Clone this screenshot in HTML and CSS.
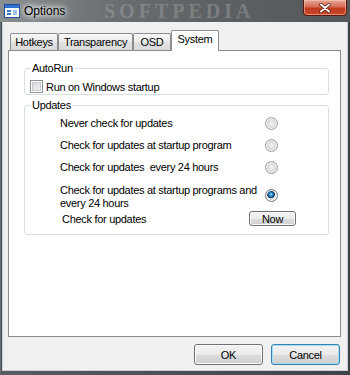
FILE: index.html
```html
<!DOCTYPE html>
<html lang="en">

<head>
    <meta charset="UTF-8">
    <meta name="viewport" content="width=device-width, initial-scale=1.0">
    <title>Options</title>
    <link rel="stylesheet" href="styles.css">
</head>

<body>

    <div class="window">
        <header class="titlebar">
            <svg class="app-icon" width="16" height="14" viewBox="0 0 16 14">
                <rect x="0.5" y="0.5" width="15" height="13" fill="#ffffff" stroke="#1f4f9a"/>
                <rect x="1" y="1" width="14" height="3" fill="#2f6fd0"/>
                <rect x="3" y="6" width="4" height="2" fill="#3a78d0"/>
                <rect x="3" y="9" width="4" height="2" fill="#3a78d0"/>
                <rect x="9" y="6" width="4" height="5" fill="#9fc0ea"/>
            </svg>
            <span class="title">Options</span>
            <span class="watermark">SOFTPEDIA</span>
            <div class="close-button">
                <svg width="12" height="10" viewBox="0 0 12 10">
                    <path d="M2 1.5 L10 8.5 M10 1.5 L2 8.5" stroke="#4a1208" stroke-width="3.4" stroke-linecap="round"/>
                    <path d="M2 1.5 L10 8.5 M10 1.5 L2 8.5" stroke="#ffffff" stroke-width="2" stroke-linecap="round"/>
                </svg>
            </div>
        </header>

        <div class="client">
            <div class="tabs">
                <div class="tab tab-hotkeys">Hotkeys</div>
                <div class="tab tab-transparency">Transparency</div>
                <div class="tab tab-osd">OSD</div>
                <div class="tab tab-system selected">System</div>
            </div>

            <div class="panel">
                <fieldset class="group group-autorun">
                    <legend>AutoRun</legend>
                    <label class="check-row"><span class="checkbox"></span>Run on Windows startup</label>
                </fieldset>

                <fieldset class="group group-updates">
                    <legend>Updates</legend>
                    <div class="option">
                        <span class="option-label">Never check for updates</span>
                        <span class="radio"></span>
                    </div>
                    <div class="option">
                        <span class="option-label">Check for updates at startup program</span>
                        <span class="radio"></span>
                    </div>
                    <div class="option">
                        <span class="option-label">Check for updates&nbsp; every 24 hours</span>
                        <span class="radio"></span>
                    </div>
                    <div class="option option-wrap">
                        <span class="option-label">Check for updates at startup programs and every 24 hours</span>
                        <span class="radio radio-on"></span>
                    </div>
                    <div class="option option-now">
                        <span class="option-label">Check for updates</span>
                        <button class="btn btn-small">Now</button>
                    </div>
                </fieldset>
            </div>

            <div class="buttons">
                <button class="btn">OK</button>
                <button class="btn btn-default">Cancel</button>
            </div>
        </div>
    </div>

</body>

</html>
```

FILE: styles.css
```css
body {
    margin: 0;
    font-family: 'Liberation Sans', Arial, sans-serif;
    font-size: 11px;
    letter-spacing: -0.3px;
    color: #000;
}

.window {
    width: 350px;
    height: 375px;
    overflow: hidden;
    background: linear-gradient(to right, #7d8486 0, #4c5355 1px, #565d60 3px, #3e4446 100%);
}

/* title bar */
.titlebar {
    position: relative;
    height: 22px;
    display: flex;
    align-items: center;
    background: linear-gradient(to right, #8a8e90 0, #6c7072 30%, #5d6163 60%, #54585a 100%);
}

.app-icon {
    margin-left: 4px;
    flex: none;
}

.title {
    margin-left: 4px;
    font-size: 12px;
    letter-spacing: 0;
    color: #000;
    text-shadow: 0 0 4px #fff, 0 0 8px #fff, 0 0 10px rgba(255, 255, 255, 0.8);
}

.watermark {
    position: absolute;
    left: 104px;
    top: 0;
    line-height: 22px;
    font-family: 'Liberation Serif', serif;
    font-weight: bold;
    font-size: 20px;
    letter-spacing: 4px;
    color: rgba(185, 185, 185, 0.35);
}

.close-button {
    margin-left: auto;
    margin-right: 3px;
    align-self: flex-start;
    width: 44px;
    height: 16px;
    box-sizing: border-box;
    border: 1px solid #5a1a10;
    border-top: none;
    border-radius: 0 0 4px 4px;
    background: linear-gradient(#e6a796 0, #d66c54 45%, #c13a1d 55%, #c8482a 100%);
    box-shadow: inset 0 0 0 1px rgba(255, 210, 190, 0.5);
    display: flex;
    align-items: center;
    justify-content: center;
    position: relative;
    z-index: 1;
}

/* client area */
.client {
    margin: 0 3px;
    height: 348px;
    background: #f0f0f0;
    box-shadow: 0 0 0 1px #c9cfd2;
}

.tabs {
    height: 28px;
    padding-left: 7px;
    display: flex;
    align-items: flex-end;
}

.tab {
    box-sizing: border-box;
    height: 17px;
    line-height: 16px;
    text-align: center;
    border: 1px solid #8c8e94;
    border-bottom: none;
    border-radius: 2px 2px 0 0;
    background: linear-gradient(#f7f7f7, #ececec 50%, #e2e2e2 51%, #d9d9d9);
}

.tab-hotkeys { width: 48px; }
.tab-transparency { width: 75px; }
.tab-osd { width: 38px; }
.tab-system { width: 48px; }

.tab.selected {
    height: 21px;
    line-height: 17px;
    margin-bottom: -1px;
    background: #fff;
    position: relative;
    z-index: 1;
}

.panel {
    margin-left: 5px;
    width: 333px;
    height: 287px;
    box-sizing: border-box;
    border: 1px solid #898c95;
    background: #fff;
    padding: 11px 0 0 15px;
}

/* group boxes */
.group {
    width: 305px;
    box-sizing: border-box;
    margin: 0;
    padding: 0 0 1px 5px;
    border: 1px solid #d5dfe5;
    border-radius: 3px;
}

.group legend {
    padding: 0 1px;
    margin-left: 1px;
    line-height: 13px;
}

.group-updates {
    margin-top: 4px;
    padding-bottom: 8px;
}

.check-row {
    margin-top: 5px;
    display: flex;
    align-items: center;
    gap: 3px;
    height: 13px;
}

.checkbox {
    width: 13px;
    height: 13px;
    box-sizing: border-box;
    border: 1px solid #8e8f8f;
    background: linear-gradient(135deg, #cfd3d8, #f6f6f6);
    box-shadow: inset 0 0 0 1px #fff, inset 0 0 0 2px #c6cace;
}

.option {
    display: flex;
    align-items: center;
    height: 22px;
    padding-left: 30px;
}

.option-label {
    width: 205px;
    flex: none;
}

.option-wrap {
    margin-top: 6px;
    height: 23px;
}

.option-wrap .option-label {
    height: 25px;
    margin-bottom: -2px;
    line-height: 13px;
    overflow: hidden;
}

.option-now {
    margin-top: 4px;
    height: 15px;
    padding-left: 32px;
}

.option-now .option-label {
    width: 187px;
}

.radio {
    width: 13px;
    height: 13px;
    box-sizing: border-box;
    border-radius: 50%;
    border: 1px solid #9a9c9e;
    background: radial-gradient(circle, #f4f4f4 0, #e0e0e0 40%, #c9c9c9 70%, #ededed 100%);
    box-shadow: inset 0 0 0 1px #fbfbfb;
}

.radio-on {
    border-color: #6d7378;
    background: radial-gradient(circle at 45% 40%, #a8e6ff 0, #3796d4 1.5px, #0e4d86 3px, #203a50 3.6px, #e8e8e8 4.2px, #cfcfcf 5px, #f0f0f0 6px);
}

/* push buttons */
.btn {
    box-sizing: border-box;
    font-family: 'Liberation Sans', Arial, sans-serif;
    font-size: 11px;
    letter-spacing: -0.3px;
    color: #000;
    border: 1px solid #707070;
    border-radius: 3px;
    background: linear-gradient(#f3f3f3 0, #ebebeb 50%, #dddddd 51%, #cfcfcf 100%);
    box-shadow: inset 0 0 0 1px #fbfbfb;
    padding: 0;
}

.btn-small {
    width: 47px;
    height: 15px;
    line-height: 12px;
}

.buttons {
    margin-top: 7px;
    padding-right: 7px;
    display: flex;
    justify-content: flex-end;
    gap: 8px;
}

.buttons .btn {
    width: 69px;
    height: 21px;
}

.btn-default {
    border-color: #3c7fb1;
    box-shadow: inset 0 0 0 1px #9ee0fa;
}
```
